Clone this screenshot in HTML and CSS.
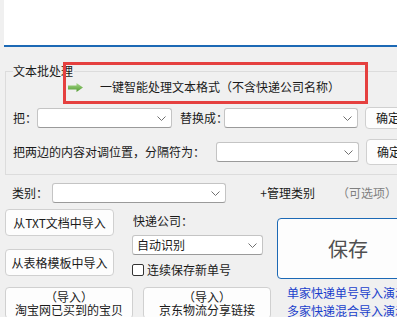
FILE: index.html
```html
<!DOCTYPE html>
<html lang="zh-CN">
<head>
<meta charset="utf-8">
<title>快递单号导入</title>
<link rel="stylesheet" href="styles.css">
</head>
<body>
<div class="top"></div>

<div class="group">
  <div class="group-title">文本批处理</div>
  <div class="action-row">
    <svg class="arrow" width="15" height="9" viewBox="0 0 15 9">
      <defs>
        <linearGradient id="g" x1="0" y1="0" x2="0" y2="1">
          <stop offset="0" stop-color="#a8d88a"/>
          <stop offset="1" stop-color="#4e9a2e"/>
        </linearGradient>
      </defs>
      <polygon points="0,2.5 8.5,2.5 8.5,0 15,4.5 8.5,9 8.5,6.5 0,6.5" fill="url(#g)"/>
    </svg>
    <span>一键智能处理文本格式（不含快递公司名称）</span>
  </div>
  <div class="row row-replace">
    <label class="lbl-ba">把：</label>
    <div class="combo combo-ba"><svg class="chev" width="9" height="5" viewBox="0 0 9 5"><polyline points="0.5,0.5 4.5,4.5 8.5,0.5" fill="none" stroke="#707070"/></svg></div>
    <label class="lbl-rep">替换成：</label>
    <div class="combo combo-rep"><svg class="chev" width="9" height="5" viewBox="0 0 9 5"><polyline points="0.5,0.5 4.5,4.5 8.5,0.5" fill="none" stroke="#707070"/></svg></div>
    <button class="btn btn-ok">确定</button>
  </div>
  <div class="row row-swap">
    <label class="lbl-swap">把两边的内容对调位置，分隔符为：</label>
    <div class="combo combo-sep"><svg class="chev" width="9" height="5" viewBox="0 0 9 5"><polyline points="0.5,0.5 4.5,4.5 8.5,0.5" fill="none" stroke="#707070"/></svg></div>
    <button class="btn btn-ok btn-tall">确定</button>
  </div>
</div>
<div class="highlight"></div>

<div class="row row-cat">
  <label class="lbl-cat">类别：</label>
  <div class="combo combo-cat"><svg class="chev" width="9" height="5" viewBox="0 0 9 5"><polyline points="0.5,0.5 4.5,4.5 8.5,0.5" fill="none" stroke="#707070"/></svg></div>
  <span class="manage">+管理类别</span>
  <span class="optional">（可选项）</span>
</div>

<div class="lower">
  <div class="lower-left">
    <div class="upper">
      <div class="col-import">
        <button class="btn btn-import">从TXT文档中导入</button>
        <button class="btn btn-import">从表格模板中导入</button>
      </div>
      <div class="col-express">
        <div class="express-label">快递公司：</div>
        <div class="combo combo-express">自动识别<svg class="chev" width="9" height="5" viewBox="0 0 9 5"><polyline points="0.5,0.5 4.5,4.5 8.5,0.5" fill="none" stroke="#707070"/></svg></div>
        <div class="check-row"><span class="box"></span>连续保存新单号</div>
      </div>
    </div>
    <div class="bottom-btns">
      <button class="btn btn-two">（导入）<br>淘宝网已买到的宝贝</button>
      <button class="btn btn-two">（导入）<br>京东物流分享链接</button>
    </div>
  </div>
  <div class="lower-right">
    <button class="btn btn-save">保存</button>
    <div class="links">
      <a href="#">单家快递单号导入演示</a>
      <a href="#">多家快递混合导入演示</a>
    </div>
  </div>
</div>
</body>
</html>
```

FILE: styles.css
```css
body {
margin: 0;
width: 397px;
height: 317px;
overflow: hidden;
position: relative;
background-color: #f0f0f0;
font-family: "Noto Sans CJK SC", "Liberation Sans", sans-serif;
font-size: 12px;
line-height: 16px;
color: #1a1a1a;
}

.top {
height: 45px;
margin-left: 4px;
background-color: #fff;
border-bottom: 2px solid #1c69b5;
}

/* group box */
.group {
margin: 24px 0 0 5px;
width: 430px;
border: 1px solid #dcdcdc;
border-right: none;
padding: 0 0 9px 7px;
}
.group-title {
width: fit-content;
margin-top: -9px;
padding: 0 1px 0 0;
height: 16px;
background-color: #f0f0f0;
}
.action-row {
display: flex;
align-items: center;
height: 16px;
}
.arrow {
margin-left: 55px;
}
.action-row span {
margin-left: 17px;
}
.highlight { /* red annotation frame drawn over the group */
position: absolute;
left: 63px;
top: 62px;
width: 305px;
height: 42px;
box-sizing: border-box;
border: 3px solid #e5403f;
}

.row {
display: flex;
align-items: center;
white-space: nowrap;
}
.row-replace {
height: 22px;
margin-top: 12px;
}
.row-swap {
height: 26px;
margin-top: 10px;
}
.lbl-ba { width: 24px; }
.lbl-rep { width: 44px; margin-left: 8px; }
.lbl-swap { width: 203px; }

.combo {
position: relative;
box-sizing: border-box;
height: 20px;
background-color: #fff;
border: 1px solid #c4c4c4;
border-bottom-color: #9a9a9a;
border-radius: 3px;
padding-left: 4px;
line-height: 18px;
}
.chev {
position: absolute;
right: 5px;
top: 7px;
}
.combo-ba { width: 135px; }
.combo-rep { width: 134px; }
.combo-sep { width: 143px; }

.btn {
box-sizing: border-box;
font-family: inherit;
font-size: 12px;
line-height: 16px;
color: #1a1a1a;
background-color: #fdfdfd;
border: 1px solid #d0d0d0;
border-radius: 4px;
padding: 0;
}
.btn-ok {
width: 60px;
height: 22px;
margin-left: 7px;
text-align: left;
padding-left: 10px;
}
.btn-tall {
height: 26px;
}

/* category row */
.row-cat {
height: 21px;
margin-top: 7px;
padding-left: 12px;
}
.lbl-cat { width: 40px; }
.combo-cat { width: 176px; }
.manage {
margin-left: 34px;
}
.optional {
margin-left: 22px;
color: #808080;
}

/* lower part */
.lower {
display: flex;
margin-top: 6px;
padding-left: 5px;
}
.lower-left {
width: 266px;
}
.upper {
display: flex;
height: 67px;
}
.col-import {
width: 109px;
display: flex;
flex-direction: column;
gap: 13px;
}
.btn-import {
height: 27px;
}
.col-express {
margin-left: 18px;
width: 131px;
}
.express-label {
margin-top: 4px;
padding-left: 1px;
}
.combo-express {
margin-top: 6px;
padding-left: 4px;
}
.check-row {
display: flex;
align-items: center;
margin-top: 7px;
}
.box {
width: 12px;
height: 12px;
box-sizing: border-box;
border: 1px solid #333;
border-radius: 2px;
background-color: #fff;
margin-right: 3px;
}
.bottom-btns {
display: flex;
gap: 10px;
margin-top: 11px;
}
.btn-two {
width: 128px;
height: 32px;
line-height: 13px;
}

.lower-right {
margin-left: 6px;
}
.btn-save {
display: block;
width: 142px;
height: 61px;
margin-top: 9px;
border-color: #1c69b5;
font-size: 20px;
color: #505050;
}
.links {
margin-top: 5px;
padding-left: 10px;
line-height: 18px;
white-space: nowrap;
}
.links a {
display: block;
color: #1a3fcc;
text-decoration: none;
}
```
